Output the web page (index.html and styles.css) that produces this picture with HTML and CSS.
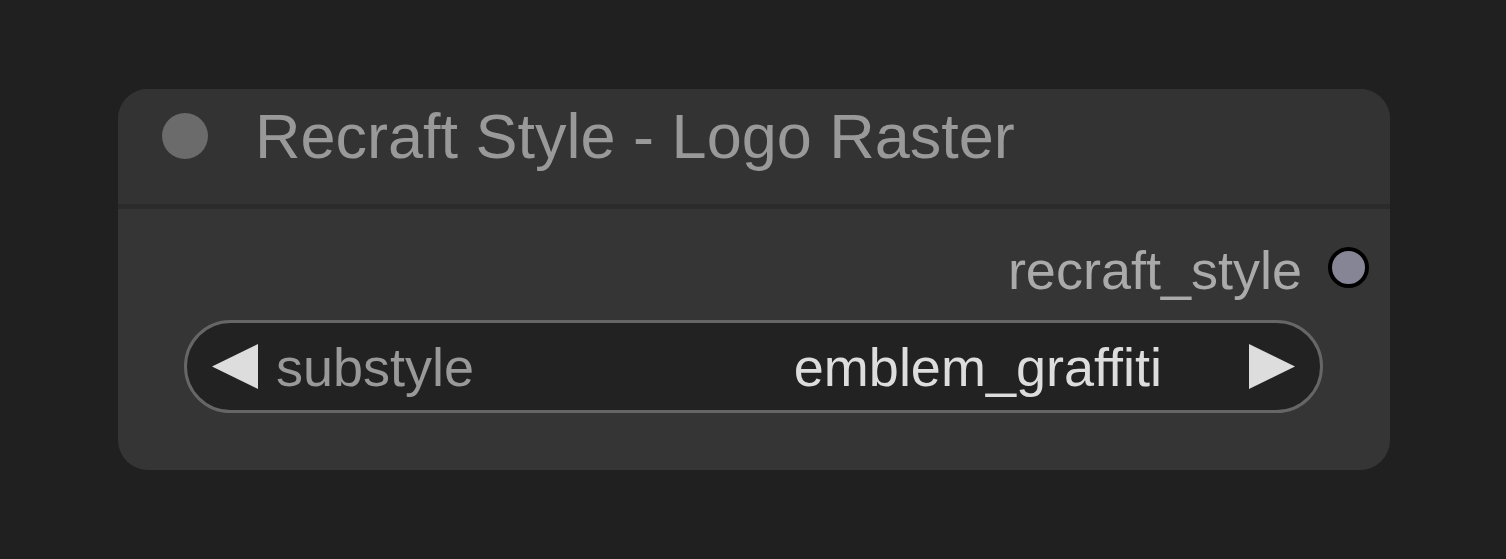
FILE: index.html
```html
<!DOCTYPE html>
<html>
<head>
<meta charset="utf-8">
<link rel="stylesheet" href="styles.css">
</head>
<body>
<div class="node">
  <div class="title-bar">
    <span class="title-dot"></span>
    <span class="title">Recraft Style - Logo Raster</span>
  </div>
  <div class="node-body">
    <div class="output-row">
      <span class="output-label">recraft_style</span>
      <span class="output-dot"></span>
    </div>
    <div class="combo">
      <svg class="arrow" width="46" height="45" viewBox="0 0 46 45"><polygon points="46,0 46,45 0,22.5" fill="#dddddd"/></svg>
      <span class="combo-label">substyle</span>
      <span class="combo-value">emblem_graffiti</span>
      <svg class="arrow" width="46" height="45" viewBox="0 0 46 45"><polygon points="0,0 0,45 46,22.5" fill="#dddddd"/></svg>
    </div>
  </div>
</div>
</body>
</html>
```
FILE: styles.css
```css
html, body {
  margin: 0;
  padding: 0;
  background: #202020;
  font-family: "Liberation Sans", Arial, sans-serif;
}
body {
  padding: 89px 0 0 118px;
  height: 559px;
  box-sizing: border-box;
}
.node {
  width: 1272px;
  height: 381px;
  background: #353535;
  border-radius: 30px;
  overflow: hidden;
  display: flex;
  flex-direction: column;
}
.title-bar {
  height: 120px;
  box-sizing: border-box;
  padding: 0 0 21px 44px;
  display: flex;
  align-items: center;
  background: #333333;
  border-bottom: 5px solid #2b2b2b;
}
.title-dot {
  width: 46px;
  height: 46px;
  border-radius: 50%;
  background: #6b6b6b;
  flex: none;
}
.title {
  margin-left: 47px;
  font-size: 63px;
  line-height: 63px;
  color: #999999;
  white-space: nowrap;
}
.node-body {
  flex: 1;
  padding: 34px 67px 0 66px;
  display: flex;
  flex-direction: column;
}
.output-row {
  display: flex;
  justify-content: flex-end;
  align-items: center;
  height: 54px;
  margin-right: -46px;
}
.output-label {
  font-size: 54px;
  line-height: 54px;
  color: #aaaaaa;
}
.output-dot {
  width: 33px;
  height: 33px;
  border: 4px solid #000;
  border-radius: 50%;
  background: #858596;
  margin-left: 26px;
  margin-top: -6px;
}
.combo {
  margin-top: 23px;
  height: 93px;
  box-sizing: border-box;
  border: 3px solid #666666;
  border-radius: 47px;
  background: #222222;
  display: flex;
  align-items: center;
  padding: 0 25px;
}
.arrow {
  flex: none;
}
.combo-label {
  margin-left: 18px;
  font-size: 54px;
  line-height: 54px;
  color: #999999;
  flex: 1;
}
.combo-value {
  font-size: 54px;
  line-height: 54px;
  color: #dddddd;
  margin-right: 87px;
}
```
